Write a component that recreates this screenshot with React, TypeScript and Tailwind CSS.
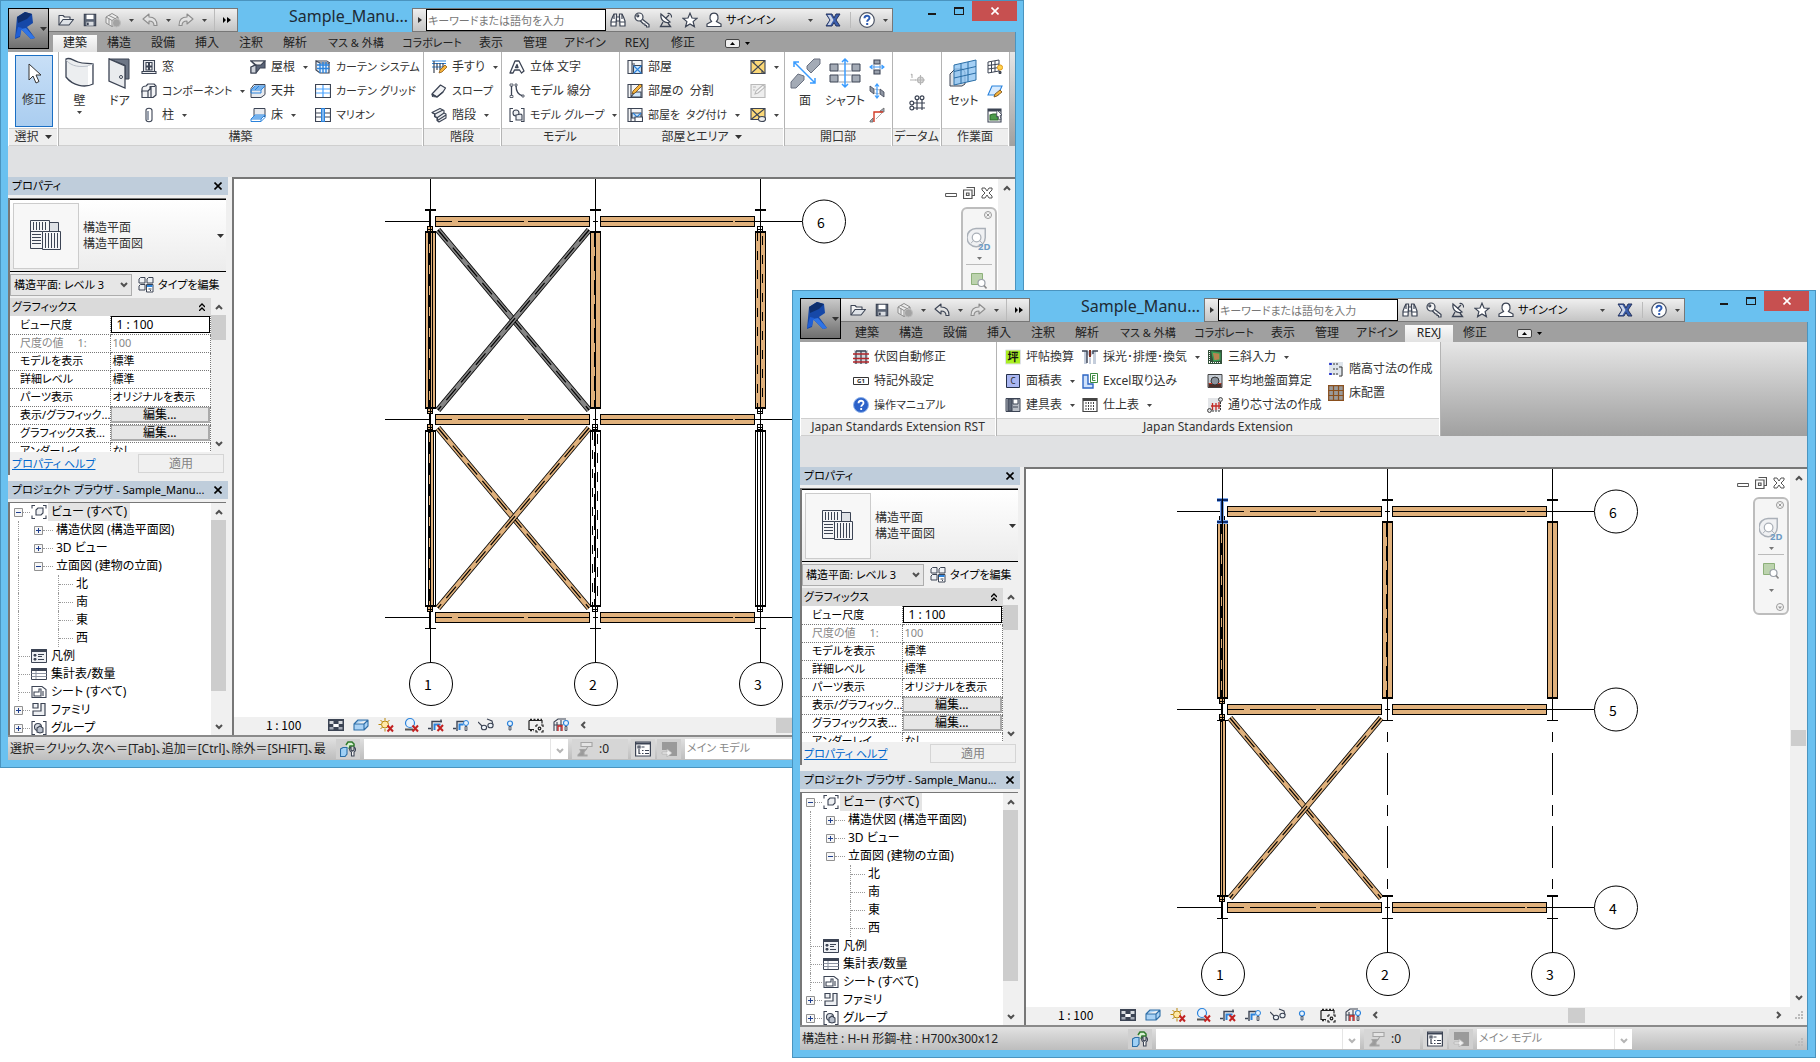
import { useId, type ReactNode } from 'react'
import clsx from 'clsx'

const INK = '#3c4454'
const BLUE = '#2b83dc'
const WOOD = '#e0b17c'

/* ---------- icons ---------- */

const icons: Record<string, ReactNode> = {
  open: (
    <g fill="#f4f4f4" stroke={INK} strokeWidth="1.1" strokeLinejoin="round">
      <path d="M1 13V3.5h4l1.5 1.5H12v2.5" />
      <path d="M1 13l4-5.5h10.5L11 13z" fill="#dfe3e8" />
    </g>
  ),
  save: (
    <g stroke={INK} strokeWidth="1.3">
      <path d="M1.5 1.5h13v13h-13z" fill="#5b6474" />
      <path d="M4 2h8v5H4z" fill="#fff" stroke="none" />
      <path d="M4 10h8v4.5H4z" fill="#d9dce1" stroke="none" />
      <path d="M5.5 11v3" strokeWidth="2" />
    </g>
  ),
  sync: (
    <g fill="#ececec" stroke="#8d8d8d" strokeWidth="1">
      <path d="M1 5l6-3.5L13 5v6l-6 3.5L1 11z" />
      <path d="M4 3.5l6 3M1 5l6 3.5L13 5M7 8.500v6M4 6.500v6" fill="none" />
      <circle cx="11.500" cy="11" r="4" fill="#a3a3a3" stroke="#bdbdbd" />
    </g>
  ),
  undo: <path d="M1 7l6-5v3c5 0 8 2.500 8 8.500h-3c0-3-1.500-4.500-5-4.500v3z" fill="#e2e2e2" stroke="currentColor" strokeWidth="1.1" strokeLinejoin="round" />,
  redo: <path d="M15 7L9 2v3c-5 0-8 2.500-8 8.500h3c0-3 1.500-4.500 5-4.500v3z" fill="#e2e2e2" stroke="currentColor" strokeWidth="1.1" strokeLinejoin="round" />,
  binoculars: (
    <g fill="#fff" stroke={INK} strokeWidth="1.2">
      <path d="M2.500 5l1.500-3h2.500v4L6 14H1V9zM13.500 5L12 2H9.500v4l.5 8h5V9z" />
      <path d="M6.500 5h3v4h-3zM1 10h5M10 10h5M4 2v5M12 2v5" />
    </g>
  ),
  key: (
    <g fill="#f4f4f4" stroke={INK} strokeWidth="1.2" strokeLinejoin="round">
      <path d="M7.500 6.500l7.500 6v2.500h-2.500v-1.500H11V12H9.500L6 8.500z" />
      <circle cx="5" cy="5" r="4" />
      <circle cx="3.800" cy="3.800" r="1" />
    </g>
  ),
  dish: (
    <g fill="none" stroke={INK} strokeWidth="1.3">
      <path d="M3 2c-1 6 4 10 9 8z" fill="#fff" />
      <path d="M7.500 6.500L11 3M5 10l-2.500 4.500h10L10 11" />
      <path d="M9.500 1.500c2.500-.5 4.500 1.500 4 4" strokeWidth="1.100" />
    </g>
  ),
  star: <path d="M8 1.200l2 4.800 5 .3-3.900 3.300 1.300 5L8 11.900l-4.400 2.700 1.300-5L1 6.300 6 6z" fill="#fff" stroke={INK} strokeWidth="1.200" />,
  user: (
    <path d="M5.500 9.500C2.500 6 4 1.200 8 1.200S13.500 6 10.500 9.500l4.500 2.500v2.500H1V12z" fill="#fff" stroke={INK} strokeWidth="1.200" />
  ),
  exchange: (
    <g>
      <path d="M1 2h6l2 4 2-4h4l-4 6 4 6h-4l-2-3.500L7 14H1l4-6z" fill="#3c5fae" stroke="#27355e" />
      <path d="M2.500 3h3l3 5-3 5h-3l3-5z" fill="#cdd5e6" />
    </g>
  ),
  help: (
    <g>
      <circle cx="8" cy="8" r="7.300" fill="#fff" stroke="#4d5566" strokeWidth="1.200" />
      <path d="M5.500 6.300c0-3.400 5-3.300 5-.3 0 1.800-2.300 1.900-2.300 3.700M8.200 11v2" fill="none" stroke="#2d5bb3" strokeWidth="2" />
    </g>
  ),
  window: (
    <g fill="#eef0f3" stroke={INK} strokeWidth="1.100">
      <path d="M2.500 1.500h11v11h-11zM1 12.500h14v2H1z" />
      <path d="M5 3.500h2.500V7H5zM8.500 3.500H11V7H8.500zM5 8h2.500v3H5zM8.500 8H11v3H8.500z" fill="#fff" />
    </g>
  ),
  component: (
    <g fill="#f2f3f5" stroke={INK} strokeWidth="1.200" strokeLinejoin="round">
      <path d="M5 3l2-2h6l2 2v9l-3 2.500H6V9H1V6c0-2 2-3 4-3z" />
      <path d="M1 8h6v6.500H1zM7 8l2-2V3.500h5M10 4v10" />
    </g>
  ),
  column: (
    <g stroke={INK} strokeWidth="1.100">
      <path d="M5 3.500C5 .5 11 .5 11 3.500v9c0 3-6 3-6 0z" fill="#fff" />
      <path d="M7 4v9" stroke="#9aa2b0" strokeWidth="2" />
    </g>
  ),
  roof: (
    <g stroke={INK} strokeWidth="1.100">
      <path d="M1 2h14v7h-5l-4 5H1V8l4-2z" fill="#5b6578" />
      <path d="M1 2h14l-4 4H6z" fill="#eee" />
      <path d="M1 8l5-2v8H1z" fill="#cfd3da" />
    </g>
  ),
  ceiling: (
    <g stroke={INK} strokeWidth="1">
      <path d="M4 1.500h11v10l-4 3H1v-9z" fill="#e8eaee" />
      <path d="M1 7l4-4h10l-4 4z" fill="#bfe0ff" stroke={BLUE} />
      <path d="M1 7v3h10V7M3 5h10M5 7l4-4" fill="none" stroke={BLUE} />
    </g>
  ),
  floor: (
    <g stroke={INK} strokeWidth="1">
      <path d="M4 1.500h11v8h-11z" fill="#e8eaee" />
      <path d="M1 12l4-4h10l-4 4z" fill="#bfe0ff" stroke={BLUE} />
      <path d="M1 12v2.500h10V12M11 14.500l4-4V8M3 10h10" fill="none" stroke={BLUE} />
    </g>
  ),
  curtainSystem: (
    <g fill="none">
      <path d="M1 2l4 2h9v10H5l-4-3z" fill="#eaf3fd" stroke={INK} strokeWidth="1.200" />
      <path d="M1 2h11l3 2" stroke={INK} />
      <path d="M2 6h12.500M2 9.500h12.500M5 4v10M8 3v11M11 3v11" stroke={BLUE} strokeWidth="1.400" />
    </g>
  ),
  curtainGrid: (
    <g fill="none">
      <path d="M.5 1.500h15v13H.5z" fill="#fff" stroke={INK} strokeWidth="1.200" />
      <path d="M8 2v12M1 6h14M1 10h14" stroke="#4aa3ff" strokeWidth="1.200" />
    </g>
  ),
  mullion: (
    <g>
      <path d="M.5 1.500h15v13H.5z" fill="#fff" stroke={INK} strokeWidth="1.200" />
      <path d="M1 6h14M1 10h14" stroke={INK} strokeWidth="1.200" />
      <path d="M6 1h4v14H6z" fill={BLUE} />
      <path d="M8 2v12" stroke="#d4e9ff" />
    </g>
  ),
  railing: (
    <g fill="none" stroke={BLUE} strokeWidth="1.200">
      <path d="M1 2h14M1 4.500h14M1 8h14" />
      <path d="M3 2v12M6 4v7M9 4v7M12 4v4" stroke={INK} />
      <path d="M8 14l1-3 5-5 2 2-5 5z" fill="#f7b43c" stroke="#8d5a17" strokeWidth=".8" />
    </g>
  ),
  ramp: (
    <g fill="#f2f3f5" stroke={INK} strokeWidth="1.200" strokeLinejoin="round">
      <path d="M1 11L9.500 2l5 3-2.500 4-6 5z" />
      <path d="M1 11l5 3 6-5M6 14l-4.500-.5L1 11" fill="none" />
    </g>
  ),
  stairs: (
    <g fill="#eceef1" stroke={INK} strokeWidth="1.100" strokeLinejoin="round">
      <path d="M9 1.500l4 2v2.500l2 1v4l-7 4-2-1.500V11L3.500 9.500V7L1 5.500z" />
      <path d="M1 5.500l3 1.500v2.500M4 7l8-4M3.500 9.500l3 1 6.500-4.500M6.500 10.500V13.500l8.500-5.500" fill="none" />
    </g>
  ),
  text3d: (
    <path d="M1 14L6 2h4l5 10-2.500 2-2-3H5.500L4 14zM6.500 8.500h2.500L8 5.500z" fill="#fff" stroke={INK} strokeWidth="1.300" strokeLinejoin="round" />
  ),
  modelLine: (
    <g fill="none" stroke={INK} strokeWidth="1.300">
      <path d="M2.500 3v9M7 2.500C7 9 9 12 14 13" />
      <path d="M1 1h3v2H1zM1 12.500h3v2H1zM6 1h2v2H6zM13 12h2v2h-2z" fill="#fff" strokeWidth=".8" />
    </g>
  ),
  modelGroup: (
    <g fill="#eceef1" stroke={INK} strokeWidth="1.100">
      <path d="M4 1.500H1v13h3M12 1.500h3v13h-3" fill="none" />
      <circle cx="7" cy="6" r="3" />
      <path d="M7 8l5-1 1 1v5H7z" />
    </g>
  ),
  room: (
    <g strokeWidth="1.100">
      <path d="M1 1.500h14v13H1z" fill="#f4f5f7" stroke={INK} />
      <path d="M5 2v12M5 5h3" stroke={INK} />
      <path d="M6.500 6.500h8v8h-8z" fill="#cfe6fb" stroke={INK} />
      <path d="M6.500 6.500l8 8M14.500 6.500l-8 8" stroke={BLUE} />
    </g>
  ),
  roomSplit: (
    <g strokeWidth="1.100">
      <path d="M1 1.500h14v13H1z" fill="#f4f5f7" stroke={INK} />
      <path d="M4 2v12M4 14l4-5h6v5z" fill="#cfe6fb" stroke={INK} />
      <path d="M5 11l1-3 7-7 2 2-7 7z" fill="#f7b43c" stroke="#6d4a17" strokeWidth=".8" />
    </g>
  ),
  roomTag: (
    <g strokeWidth="1.100">
      <path d="M1 1.500h14v13H1z" fill="#f4f5f7" stroke={INK} />
      <path d="M4 2v12M5 6h9v5H5z" fill="#cfe6fb" stroke={INK} />
      <path d="M6 6l4 4 4-4" fill="none" stroke={BLUE} />
      <path d="M8 10h7.500v4.500H8z" fill="#fff" stroke={INK} />
    </g>
  ),
  area: (
    <g stroke={INK} strokeWidth="1.100">
      <path d="M1 1.500h14v13H1z" fill="#fbd878" />
      <path d="M1 1.500l14 13M15 1.500l-14 13M4 2v3M12 14v-3" />
    </g>
  ),
  areaOff: (
    <g stroke="#b9b9b9" strokeWidth="1.100">
      <path d="M1 1.500h14v13H1z" fill="#eee" />
      <path d="M5 11l1-3 7-6 2 2-7 6zM3 4h3M3 7h2" fill="#f8f8f8" />
    </g>
  ),
  areaTag: (
    <g stroke={INK} strokeWidth="1.100">
      <path d="M1 1.500h14v11H1z" fill="#fbd878" />
      <path d="M1 1.500l12 12M15 1.500l-14 11" />
      <ellipse cx="12" cy="12" rx="3.500" ry="2.500" fill="#eee" />
    </g>
  ),
  wallOpening: (
    <g strokeWidth="1.100">
      <path d="M5 1h6v4H5zM5 11h6v4H5z" fill="#9aa1ad" stroke={INK} />
      <path d="M5 5v6M11 5v6" stroke="#9aa1ad" />
      <path d="M1 8h14M3.500 6L1 8l2.500 2M12.500 6L15 8l-2.500 2" fill="none" stroke="#3a9cff" />
    </g>
  ),
  verticalOpening: (
    <g strokeWidth=".8">
      <path d="M1 3l4 3v5L1 8zM11 6l4 3v5l-4-3z" fill="#8f96a3" stroke={INK} />
      <path d="M5 6l6 1M5 10l6 1" stroke="#9aa1ad" />
      <path d="M8 1v14M6 3.500L8 1l2 2.500M6 12.500L8 15l2-2.500" fill="none" stroke="#3a9cff" strokeWidth="1.200" />
    </g>
  ),
  dormer: (
    <g fill="none" strokeWidth="1.400">
      <path d="M1 14l3-3v4H1zM11 4l4-3v4h-4z" fill="#a4abb6" stroke="#666" strokeWidth=".8" />
      <path d="M5 15V5h9" stroke="#d23a26" />
      <path d="M7 12l6-6" stroke="#999" strokeWidth=".8" />
    </g>
  ),
  level: (
    <g fill="none" stroke="#b5b5b5" strokeWidth="1.100">
      <path d="M1 9h6M3 3v4M2 4l1-1" />
      <circle cx="11.500" cy="9" r="3" fill="#dcdcdc" />
      <path d="M11.500 4v10M6 9h10" />
    </g>
  ),
  grid: (
    <g fill="#fff" stroke={INK} strokeWidth="1.200">
      <path d="M8 3v12M13 3v12M3 8h13M3 13h13" />
      <circle cx="8" cy="2.800" r="1.900" />
      <circle cx="13" cy="2.800" r="1.900" />
      <circle cx="2.800" cy="8" r="1.900" />
      <circle cx="2.800" cy="13" r="1.900" />
    </g>
  ),
  planeShow: (
    <g fill="none" stroke={INK} strokeWidth="1">
      <path d="M1 3l11-2v11L1 14zM4.500 2.500v11M8 2v11M1 6.500l11-1.500M1 10l11-1.500" />
      <circle cx="13" cy="8.500" r="2.600" fill="#ffd34d" stroke="#e29a1c" />
      <path d="M12 12.500h2v2h-2z" fill="#555" />
    </g>
  ),
  planeRef: (
    <g strokeWidth="1.100">
      <path d="M1 12L5 3h10l-4 9z" fill="#d7ebff" stroke={BLUE} />
      <path d="M7 14l1-3 5-4 2 2-5 4z" fill="#f7b43c" stroke="#6d4a17" strokeWidth=".8" />
    </g>
  ),
  planeViewer: (
    <g strokeWidth="1.100">
      <path d="M1 2h13v13H1z" fill="#fff" stroke={INK} />
      <path d="M1 2h13v2.500H1z" fill={INK} />
      <path d="M3 8l3-1h5v6H3z" fill="#4c9a4a" stroke="#2e6b2d" />
      <path d="M10 3l5 5-2 .5 1 4-2 .5-1-4-1.500 1z" fill="#fff" stroke={INK} strokeWidth=".8" />
    </g>
  ),
  autoFix: (
    <g fill="none" strokeWidth="1.300">
      <path d="M1 1h14v14H1z" fill="#d3d7dc" />
      <path d="M3 2v13M8 2v13M13 2v13M3 2h10" stroke={INK} />
      <path d="M0 5h16M0 9.500h16M0 13h16" stroke="#b3262a" />
    </g>
  ),
  g1: (
    <g>
      <path d="M.5 4.500h15v7H.5z" fill="#fff" stroke="#333" />
      <text x="8" y="10" fontSize="6" fontWeight="bold" textAnchor="middle" fill="#222">G1</text>
    </g>
  ),
  manual: (
    <g>
      <circle cx="8" cy="8" r="7.500" fill="#2c62c9" stroke="#8fb2ea" />
      <path d="M5.500 6.300c0-3.400 5-3.300 5-.3 0 1.800-2.300 1.900-2.300 3.700M8.200 11v2" fill="none" stroke="#fff" strokeWidth="1.800" />
    </g>
  ),
  tsubo: (
    <g>
      <path d="M.5 1h15v14H.5z" fill="#a9ef22" stroke="#dce0e6" />
      <text x="8" y="12" fontSize="11" fontWeight="bold" textAnchor="middle" fill="#111">坪</text>
    </g>
  ),
  areaTable: (
    <g>
      <path d="M1.500 1.500h13v13h-13z" fill="#a9b6f2" stroke="#25304a" />
      <text x="8" y="11" fontSize="8" textAnchor="middle" fill="#222">C</text>
    </g>
  ),
  doorTable: (
    <g stroke={INK}>
      <path d="M1 1.500h14v13H1z" fill="#b9bec6" />
      <path d="M3 2h4v12H3z" fill="#5e6776" />
      <path d="M8 2h5v5H8zM8 10h5" fill="#fff" />
    </g>
  ),
  light: (
    <g>
      <path d="M2 2h12v13H2z" fill="#c4cddb" />
      <path d="M5 5l3 3 3-3v10H9V9L8 8 7 9v6H5z" fill="#fff" />
      <path d="M0 2h5v12M16 2h-5v3" fill="none" stroke={INK} strokeWidth="1.400" />
      <path d="M8 1v7" stroke="#7d2f22" strokeWidth="2" />
    </g>
  ),
  excel: (
    <g>
      <path d="M1 2h5v9h5v4H1z" fill="#cfe1fb" stroke="#2e66c4" strokeWidth="1.400" />
      <path d="M8.500.5h7v9h-7z" fill="#fff" stroke="#3b8a41" />
      <path d="M13.500 2.500h-3v5h3M10.500 5H13" fill="none" stroke="#3b8a41" />
    </g>
  ),
  finish: (
    <g fill="none" stroke="#444">
      <path d="M1 1.500h14v13H1z" fill="#fff" strokeWidth="1.200" />
      <path d="M1 3h14" strokeWidth="2" />
      <path d="M4 5v9M6.500 5v9M9 5v9M11.500 5v9" strokeDasharray="2 1" />
    </g>
  ),
  triangle: (
    <g>
      <path d="M1 1h14v14H1z" fill="#33503a" />
      <path d="M5 3l8 1v7l-6 1z" fill="#b98450" stroke="#39a056" strokeWidth="1.300" />
      <path d="M2 13.500h12M2.500 2v12" stroke="#fff" strokeDasharray="1 1" />
    </g>
  ),
  ground: (
    <g>
      <path d="M1 1.500h14v13H1z" fill="#c5ccd4" stroke="#444" />
      <path d="M1.500 10h13v4h-13z" fill="#4c2f2a" />
      <circle cx="8" cy="8" r="4" fill="#8c949e" stroke="#333" />
      <path d="M2 10.500h3M11 10.500h3" stroke="#d23a26" />
    </g>
  ),
  gridDim: (
    <g fill="none">
      <path d="M1 1h13v13H1z" fill="#e3e5e8" />
      <path d="M4 9h9M5.500 6v7M9 6v7M12 5v7" stroke="#c22a26" strokeWidth="1.300" />
      <circle cx="13.500" cy="2.500" r="1.900" stroke="#333" />
      <circle cx="2.500" cy="13.500" r="1.900" stroke="#333" />
      <path d="M13.500 5v9M5 14h8" stroke="#333" strokeDasharray="2 1" />
    </g>
  ),
  heightDim: (
    <g fill="none">
      <path d="M1 1h14v13H1z" fill="#dfe5ec" />
      <path d="M1 3h3M1 13h3M2.500 2v2M2.500 12v2" stroke="#1f2fd0" strokeWidth="1.500" />
      <path d="M5 3h5M5 8h5M5 13h5" stroke="#333" strokeDasharray="2 1" />
      <path d="M11 6h3v9h-3" stroke="#333" />
    </g>
  ),
  floorLayout: (
    <g>
      <path d="M0 0h16v16H0z" fill="#9a9a9a" />
      <path d="M.7 0v16M5.500 0v16M10.500 0v16M15.300 0v16M0 .7h16M0 5.500h16M0 10.500h16M0 15.300h16" stroke="#8a4f1d" strokeWidth="1.200" />
    </g>
  ),
  editType: (
    <g fill="#eef0f3" stroke={INK} strokeWidth="1">
      <path d="M1 2l1.500-1.500H7V6H1zM9 2l1.500-1.500H15V6H9zM1 9l1.500-1.500H7V13H1z" />
      <path d="M8.500 7.500h6.500V15H8.500z" fill="#fff" />
      <path d="M9 8h5.500v2H9z" fill={BLUE} stroke="none" />
      <path d="M10.500 12h3M12 13.500h1" />
    </g>
  ),
  treeView: (
    <g fill="none" stroke={INK} strokeWidth="1.100">
      <path d="M4 1.500H1v3M12 1.500h3v3M4 14.500H1v-3M12 14.500h3v-3" />
      <path d="M5 6l2-2h5v5l-2 2H5z" fill="#eef0f3" />
    </g>
  ),
  treeLegend: (
    <g stroke={INK}>
      <path d="M.5 1.500h15v13H.5z" fill="#eef0f3" />
      <path d="M.5 1.500h15v2H.5z" fill={INK} />
      <path d="M3 6.500h2v1.500H3zM3 10.500h2v1.500H3z" fill={INK} />
      <path d="M7 6.500h6M7 8.500h4M7 11.500h6" />
    </g>
  ),
  treeTable: (
    <g stroke={INK}>
      <path d="M.5 2.500h15v11H.5z" fill="#fff" />
      <path d="M.5 2.500h15v2H.5z" fill={INK} />
      <path d="M5 5v8M.5 7.500h15M.5 10.500h15" stroke="#8d94a2" />
    </g>
  ),
  treeSheet: (
    <g fill="#fff" stroke={INK} strokeWidth="1.100">
      <path d="M1 2.500h10l4 3v8H1z" />
      <path d="M3 8h5V5h2v7H3zM12 7v5" fill="none" />
    </g>
  ),
  treeFamily: <path d="M2 1.500h5V6H2zM10 1.500h4v12H2V9h8z" fill="#eef0f3" stroke={INK} strokeWidth="1.200" />,
  treeGroup: (
    <g fill="none" stroke={INK} strokeWidth="1.100">
      <path d="M4 1.500H1v13h3M12 1.500h3v13h-3" />
      <circle cx="7" cy="7" r="3.500" fill="#d8dce3" />
      <path d="M6 8l3-2 3 2v4l-3 1-3-1z" fill="#b9c0cc" />
    </g>
  ),
  detail: (
    <g>
      <path d="M0 2h16v12H0z" fill={INK} />
      <path d="M1.500 4h4v3h-4zM10.500 4h4v3h-4zM5.500 7h5v3h-5z" fill="#d7dade" />
      <path d="M1.500 10h4v2.500h-4zM10.500 10h4v2.500h-4z" fill="#a6acb7" />
      <path d="M5.500 7h5v3h-5z" fill="#fff" />
    </g>
  ),
  visual: <path d="M1 7l4-4h10v6l-4 4H1zM1 7h10l4-4M11 7v6" fill="#a9d2f5" stroke="#2f6fa8" strokeWidth="1.100" strokeLinejoin="round" />,
  sunOff: (
    <g>
      <circle cx="7" cy="7.500" r="3.500" fill="#ffe9a6" stroke="#b8860b" />
      <path d="M7 1v2.500M7 12v2.500M.5 7.500H3M2.500 3l2 2M11.500 3l-2 2M2.500 12l2-2" stroke="#b8860b" />
      <path d="M9.500 8.500l5.500 6M15 8.500l-5.500 6" stroke="#c22222" strokeWidth="2" />
    </g>
  ),
  shadowOff: (
    <g>
      <circle cx="7" cy="6" r="4.500" fill="#e8f3fd" stroke={BLUE} strokeWidth="1.200" />
      <path d="M2 12.500h8" stroke="#555" strokeWidth="2" />
      <path d="M9.500 8.500l5.500 6M15 8.500l-5.500 6" stroke="#c22222" strokeWidth="2" />
    </g>
  ),
  cropOff: (
    <g fill="none">
      <path d="M0 11.500h3M4 14V4.500h10M13 2.500v3" stroke={INK} strokeWidth="1.400" />
      <path d="M6.500 13V7.500h6" stroke={BLUE} strokeWidth="2" />
      <path d="M9.500 8l5.500 6M15 8l-5.500 6" stroke="#c22222" strokeWidth="2" />
    </g>
  ),
  cropShow: (
    <g fill="none">
      <path d="M0 11.500h3M4 14V4.500h7" stroke={INK} strokeWidth="1.400" />
      <path d="M6.500 13V7.500h4" stroke={BLUE} strokeWidth="2" />
      <circle cx="13" cy="6" r="2.500" fill="#e8f3fd" stroke={BLUE} />
      <path d="M12 9.500h2v4h-2z" fill="#ccc" stroke={INK} strokeWidth=".8" />
    </g>
  ),
  glasses: (
    <g fill="#eef3f8" stroke={INK} strokeWidth="1.100">
      <path d="M0 5l4 4M9 2l5 2 1 4" fill="none" />
      <ellipse cx="6" cy="10.500" rx="2.600" ry="2.300" />
      <ellipse cx="12.500" cy="8.500" rx="2.600" ry="2.300" />
    </g>
  ),
  bulb: (
    <g>
      <circle cx="7" cy="6.500" r="2.500" fill="#e8f3fd" stroke={BLUE} strokeWidth="1.200" />
      <path d="M6 9.500h2v3.500H6z" fill="#bcd" stroke={INK} strokeWidth=".8" />
    </g>
  ),
  filmstrip: (
    <g fill="none" stroke="#222" strokeWidth="1.200">
      <path d="M1 3.500h13v3M1 3.500v9h5" />
      <path d="M2 2.500h12M2 13.500h4" strokeDasharray="2 1.500" strokeWidth="1.600" />
      <path d="M8 8h2M13 8h2v2M8 8v2M8 13v2h2M13 15h2v-2" />
      <circle cx="11.500" cy="11.500" r="1.300" />
    </g>
  ),
  analytic: (
    <g fill="none" stroke={INK} strokeWidth="1.100">
      <path d="M1 14V5l4-3h8M1 8h9M4 5v9M8 3v11" />
      <path d="M5 14V9h4v5" stroke="#cc2222" strokeWidth="1.300" />
      <circle cx="13" cy="6" r="2.500" fill="#e8f3fd" stroke={BLUE} />
      <path d="M12 9.500h2v4h-2z" fill="#ccc" strokeWidth=".8" />
    </g>
  ),
  workset: (
    <g strokeWidth="1.100">
      <path d="M6 4l2-3h4l2 2v2h-4L9 8" fill="#d7f0d2" stroke="#2f7a2b" strokeWidth="1.500" />
      <path d="M.5 8L3 6.500h4V13l-2 2.500H.5z" fill="#9fd0f5" stroke="#2b6ea6" />
      <path d="M11 6v3l1.500 1L14 9V6c2 1 2 4 0 5v4h-2.500v-4c-2.500-1-2.500-4-.5-5z" fill="#fff" stroke={INK} />
    </g>
  ),
  filter: (
    <g fill="#e4e4e4" stroke="#a5a5a5" strokeWidth="1.100">
      <path d="M4 1.500h11v4H4zM11 5.500L9 8.500" />
      <path d="M3 8.500h6l-2 2.500v3h3v1H1v-1l3-3z" fill="#9b9b9b" />
    </g>
  ),
  options: (
    <g fill="none" stroke={INK} strokeWidth="1.200">
      <path d="M.6 1h14.800v14H.6z" fill="#fff" />
      <path d="M1 2.500h14" strokeWidth="2" />
      <path d="M3 5h2v2H3zM6.500 6h3M7 9.500h1.500M10 9.500h4M7 12.500h1.500M10 12.500h4M4 8v4.500h1.500" />
    </g>
  ),
  exclude: (
    <g>
      <path d="M1 1h15v14H8V9H1z" fill="#9a9a9a" />
      <path d="M1 11h5V8l5 4-5 4v-3H1z" fill="#eee" stroke="#b5b5b5" strokeWidth=".8" />
    </g>
  ),
}

function Icon({ name, className = 'size-4' }: { name: string; className?: string }) {
  return (
    <svg viewBox="0 0 16 16" className={clsx('shrink-0', className)} aria-hidden="true">
      {icons[name]}
    </svg>
  )
}

function Caret({ className = 'text-[#444]' }: { className?: string }) {
  return (
    <svg viewBox="0 0 5 3" className={clsx('h-[3px] w-[5px] shrink-0', className)} aria-hidden="true">
      <path d="M0 0h5L2.500 3z" fill="currentColor" />
    </svg>
  )
}

function Chevron({ dir, className = 'text-[#505050]' }: { dir: 'up' | 'down' | 'left' | 'right'; className?: string }) {
  const paths = {
    up: 'M1 6l3-3 3 3',
    down: 'M1 2l3 3 3-3',
    left: 'M6 1L3 4l3 3',
    right: 'M2 1l3 3-3 3',
  }
  return (
    <svg viewBox="0 0 8 8" className={clsx('size-2 shrink-0', className)} aria-hidden="true">
      <path d={paths[dir]} fill="none" stroke="currentColor" strokeWidth="2" />
    </svg>
  )
}

/* ---------- title bar ---------- */

function AppLogo() {
  return (
    <svg viewBox="0 0 40 40" className="size-10" aria-hidden="true">
      <path d="M8 8l8-5 7 2 1 9-6 4 8 11-4 1-10-10-1 8-5 2z" fill="#1648a8" />
      <path d="M8 8l8-5 7 2-5 5-9 4z" fill="#0e2f6e" />
      <path d="M12 20l5-1 9 10-4 1z" fill="#2f74e6" />
      <path d="M9 18l4 1-2 8-5 2z" fill="#1f5fd6" />
      <path d="M31 18h7l-3.500 4z" fill="#333" />
    </svg>
  )
}

function TitleBar({ canUndo }: { canUndo: boolean }) {
  return (
    <header className="-mt-px -mr-px flex h-8 items-start pl-[41px]">
      <div className="mt-2 flex h-6 w-[189px] shrink-0 items-center border border-l-0 border-[#777] bg-linear-to-b from-[#efefef] to-[#c4c4c4] pl-[9px]">
        <button type="button" aria-label="開く"><Icon name="open" /></button>
        <button type="button" aria-label="保存" className="ml-[9px]"><Icon name="save" className="size-[14px]" /></button>
        <button type="button" aria-label="同期" className="ml-2 flex items-center gap-2"><Icon name="sync" /><Caret /></button>
        <button type="button" aria-label="元に戻す" className={clsx('ml-2 flex items-center gap-2', canUndo ? 'text-[#3c4454]' : 'text-[#8d8d8d]')}><Icon name="undo" /><Caret /></button>
        <button type="button" aria-label="やり直し" className="ml-[7px] flex items-center gap-2 text-[#8d8d8d]"><Icon name="redo" /><Caret /></button>
        <button type="button" aria-label="カスタマイズ" className="ml-[7px] flex h-full items-center border-l border-[#bbb] pl-2">
          <svg viewBox="0 0 8 6" className="h-[6px] w-2" aria-hidden="true"><path d="M0 0l3 3-3 3zM4 0l4 3-4 3z" /></svg>
        </button>
      </div>
      <h1 className="mt-1 flex-1 truncate pr-1 text-right font-['Noto_Sans',sans-serif] text-base text-[#1e2a35]">Sample_Manu...</h1>
      <div className="mt-2 flex h-6 w-[481px] shrink-0 items-center border border-[#777] bg-linear-to-b from-[#efefef] to-[#c4c4c4]">
        <svg viewBox="0 0 4 6" className="ml-[5px] h-2 w-1" aria-hidden="true"><path d="M0 0l4 3-4 3z" fill="#333" /></svg>
        <input aria-label="検索" placeholder="キーワードまたは語句を入力" className="ml-1 h-[22px] w-[180px] border border-black bg-white px-px text-[11px] outline-none placeholder:text-[#777]" />
        <div className="ml-1 flex items-center gap-2">
          <button type="button" aria-label="検索する"><Icon name="binoculars" /></button>
          <button type="button" aria-label="サブスクリプション"><Icon name="key" /></button>
          <button type="button" aria-label="通信センター"><Icon name="dish" /></button>
          <button type="button" aria-label="お気に入り"><Icon name="star" /></button>
        </div>
        <button type="button" className="ml-2 flex flex-1 items-center gap-1 text-[11px]"><Icon name="user" />サインイン<Caret className="ml-auto text-[#444]" /></button>
        <button type="button" aria-label="Exchange" className="ml-3"><Icon name="exchange" /></button>
        <button type="button" aria-label="ヘルプ" className="ml-[9px] flex items-center gap-2 border-l border-[#bbb] pr-1 pl-2"><Icon name="help" /><Caret /></button>
      </div>
      <div className="ml-[25px] flex h-[21px] shrink-0 text-[#1a1a1a]">
        <button type="button" aria-label="最小化" className="flex w-[27px] items-end justify-center pb-[6px]"><span className="h-[2px] w-2 bg-current" /></button>
        <button type="button" aria-label="最大化" className="flex w-[27px] items-center justify-center pt-px"><span className="h-2 w-[10px] border border-t-2 border-current" /></button>
        <button type="button" aria-label="閉じる" className="mt-px flex w-[45px] items-center justify-center bg-[#c75050] text-white">
          <svg viewBox="0 0 8 8" className="size-2" aria-hidden="true"><path d="M.5.5l7 7M7.500.5l-7 7" stroke="currentColor" strokeWidth="1.600" /></svg>
        </button>
      </div>
    </header>
  )
}

/* ---------- ribbon ---------- */

const tabs = [
  { label: '建築', width: 'w-11' },
  { label: '構造', width: 'w-11' },
  { label: '設備', width: 'w-11' },
  { label: '挿入', width: 'w-11' },
  { label: '注釈', width: 'w-11' },
  { label: '解析', width: 'w-11' },
  { label: 'マス & 外構', width: 'w-[78px]' },
  { label: 'コラボレート', width: 'w-[74px]' },
  { label: '表示', width: 'w-11' },
  { label: '管理', width: 'w-11' },
  { label: 'アドイン', width: 'w-14' },
  { label: 'REXJ', width: 'w-12' },
  { label: '修正', width: 'w-11' },
]

function RibbonTabs({ active }: { active: string }) {
  return (
    <nav className="flex h-5 items-end bg-[#a0a0a0] pl-[45px]">
      {tabs.map(tab => (
        <button
          key={tab.label}
          type="button"
          className={clsx(
            'h-[17px] shrink-0 pb-[2px] leading-[15px] whitespace-nowrap text-[#222]',
            tab.label.length > 5 ? 'text-[11px]' : 'text-xs',
            tab.width,
            tab.label === active && 'bg-linear-to-b from-[#fafafa] to-[#e2e2e2]',
          )}
        >
          {tab.label}
        </button>
      ))}
      <button type="button" aria-label="リボンを最小化" className="ml-5 flex h-[17px] items-center gap-[5px]">
        <span className="flex h-[9px] w-[15px] items-center justify-center rounded-xs border border-[#444] bg-[#eee]">
          <svg viewBox="0 0 5 3" className="h-[3px] w-[5px]" aria-hidden="true"><path d="M0 3h5L2.500 0z" /></svg>
        </span>
        <Caret className="text-black" />
      </button>
    </nav>
  )
}

function RibbonPanel({ title, width, menu, children }: { title: string; width: string; menu?: boolean; children: ReactNode }) {
  return (
    <section className={clsx('flex shrink-0 flex-col border-r border-[#b4b4b4]', width)}>
      <div className="flex h-[76px] pt-[3px]">{children}</div>
      <h2 className="mr-px flex h-[18px] items-center justify-center gap-[6px] border-y border-[#cfcfcf] bg-[#eeeeee] text-xs leading-4 whitespace-nowrap text-[#333]">
        {title}
        {menu && <svg viewBox="0 0 7 4" className="h-1 w-[7px]" aria-hidden="true"><path d="M0 0h7L3.500 4z" fill="#333" /></svg>}
      </h2>
    </section>
  )
}

function Tool({ icon, label, menu, small }: { icon: string; label: string; menu?: boolean; small?: boolean }) {
  return (
    <button type="button" className={clsx('flex h-6 items-center gap-[5px] whitespace-pre text-[#333]', small ? 'text-[11px]' : 'text-xs')}>
      <Icon name={icon} />
      {label}
      {menu && <Caret className="ml-[3px] text-[#444]" />}
    </button>
  )
}

function ToolColumn({ width, children }: { width?: string; children: ReactNode }) {
  return <div className={clsx('flex shrink-0 flex-col', width)}>{children}</div>
}

function BigTool({ label, menu, width, children }: { label: string; menu?: boolean; width: string; children: ReactNode }) {
  return (
    <button type="button" className={clsx('flex h-[72px] shrink-0 flex-col items-center text-xs leading-4 whitespace-nowrap text-[#333]', width)}>
      <svg viewBox="0 0 32 32" className="mt-[2px] mb-1 size-8" aria-hidden="true">{children}</svg>
      {label}
      {menu && <Caret className="mt-[2px] text-[#444]" />}
    </button>
  )
}

function ArchitectureRibbon() {
  return (
    <>
      <RibbonPanel title="選択" width="w-[50px]" menu>
        <button type="button" className="ml-[6px] flex h-[72px] w-[38px] flex-col items-center border border-[#1b6fc4] bg-linear-to-b from-[#c8dff6] to-[#aacdf0] text-xs text-[#333]">
          <svg viewBox="0 0 16 24" className="mt-[6px] h-6 w-4" aria-hidden="true">
            <path d="M3 2v16l4-4 3 7 3-1.500-3-6.500h5z" fill="#fff" stroke="#333" />
          </svg>
          <span className="mt-[6px]">修正</span>
        </button>
      </RibbonPanel>
      <RibbonPanel title="構築" width="w-[365px]">
        <BigTool label="壁" menu width="w-[41px]">
          <path d="M2 2c4-2 6 1 12 3s10 1 15 2v20c-8 4-20 2-27-7z" fill="#eceef0" stroke={INK} strokeWidth="1.300" />
          <path d="M2 3c6 7 14 7 22 6l5-2" fill="none" stroke="#b8bec8" />
          <path d="M24 9v19l4-1.500V8z" fill="#fff" />
        </BigTool>
        <BigTool label="ドア" width="w-[39px]">
          <path d="M5 2h20v20h-4V8z" fill="#6d7686" stroke={INK} />
          <path d="M5 2l16 7v22L5 24z" fill="#e9ebee" stroke={INK} strokeWidth="1.300" />
          <circle cx="17" cy="20" r="1.500" fill="#fff" stroke={INK} />
        </BigTool>
        <ToolColumn width="w-[107px] pl-[2px]">
          <Tool icon="window" label="窓" />
          <Tool icon="component" label="コンポーネント" menu small />
          <Tool icon="column" label="柱" menu />
        </ToolColumn>
        <ToolColumn width="w-[69px] pl-1">
          <Tool icon="roof" label="屋根" menu />
          <Tool icon="ceiling" label="天井" />
          <Tool icon="floor" label="床" menu />
        </ToolColumn>
        <ToolColumn>
          <Tool icon="curtainSystem" label="カーテン システム" small />
          <Tool icon="curtainGrid" label="カーテン グリッド" small />
          <Tool icon="mullion" label="マリオン" small />
        </ToolColumn>
      </RibbonPanel>
      <RibbonPanel title="階段" width="w-[78px]">
        <ToolColumn width="pl-[7px]">
          <Tool icon="railing" label="手すり" menu />
          <Tool icon="ramp" label="スロープ" small />
          <Tool icon="stairs" label="階段" menu />
        </ToolColumn>
      </RibbonPanel>
      <RibbonPanel title="モデル" width="w-[118px]">
        <ToolColumn width="pl-[7px]">
          <Tool icon="text3d" label="立体 文字" />
          <Tool icon="modelLine" label="モデル 線分" />
          <Tool icon="modelGroup" label="モデル グループ" menu small />
        </ToolColumn>
      </RibbonPanel>
      <RibbonPanel title="部屋とエリア" width="w-[165px]" menu>
        <ToolColumn width="w-[130px] pl-[7px]">
          <Tool icon="room" label="部屋" />
          <Tool icon="roomSplit" label="部屋の  分割" />
          <Tool icon="roomTag" label="部屋を  タグ付け" menu small />
        </ToolColumn>
        <ToolColumn>
          <Tool icon="area" label="" menu />
          <Tool icon="areaOff" label="" />
          <Tool icon="areaTag" label="" menu />
        </ToolColumn>
      </RibbonPanel>
      <RibbonPanel title="開口部" width="w-[108px]">
        <BigTool label="面" width="w-10">
          <path d="M18 12V9l7-7h6v5l-9 9zM2 25l7-8 6 2v4l-8 8H2z" fill="#a4abb6" stroke="#6a7180" />
          <path d="M5 5l21 21M5 10V5h5M26 21v5h-5" fill="none" stroke="#3a9cff" strokeWidth="1.500" />
        </BigTool>
        <BigTool label="シャフト" width="w-10">
          <path d="M1 7h8v7H1zM23 7h8v7h-8zM1 18h8v7H1zM23 18h8v7h-8z" fill="#a4abb6" stroke={INK} />
          <path d="M9 7h14M9 14h14M9 18h14M9 25h14" stroke="#9aa1ad" />
          <path d="M16 2v28M13 5l3-3 3 3M13 27l3 3 3-3" fill="none" stroke="#3a9cff" strokeWidth="1.500" />
        </BigTool>
        <ToolColumn width="pl-1">
          <Tool icon="wallOpening" label="" />
          <Tool icon="verticalOpening" label="" />
          <Tool icon="dormer" label="" />
        </ToolColumn>
      </RibbonPanel>
      <RibbonPanel title="データム" width="w-[49px]">
        <ToolColumn width="pt-3 pl-4">
          <Tool icon="level" label="" />
          <Tool icon="grid" label="" />
        </ToolColumn>
      </RibbonPanel>
      <RibbonPanel title="作業面" width="w-[68px]">
        <BigTool label="セット" width="w-[43px]">
          <path d="M2 17l5-5h8l2 3v12l-3 2H2z" fill="#dde1e6" stroke={INK} />
          <path d="M6 8l22-5v20L6 28z" fill="#8ec4f2" fillOpacity=".8" stroke="#2b6ea6" />
          <path d="M13 6.500v20M20 5v20M6 14.500l22-5M6 21l22-5" stroke="#2b6ea6" />
        </BigTool>
        <ToolColumn width="pl-[2px]">
          <Tool icon="planeShow" label="" />
          <Tool icon="planeRef" label="" />
          <Tool icon="planeViewer" label="" />
        </ToolColumn>
      </RibbonPanel>
      <div className="flex-1 bg-linear-to-b from-[#e6e6e6] to-[#a0a0a0]" />
    </>
  )
}

function RexjRibbon() {
  return (
    <>
      <RibbonPanel title="Japan Standards Extension RST" width="w-[196px]">
        <ToolColumn width="pl-[52px]">
          <Tool icon="autoFix" label="伏図自動修正" />
          <Tool icon="g1" label="特記外設定" />
          <Tool icon="manual" label="操作マニュアル" small />
        </ToolColumn>
      </RibbonPanel>
      <RibbonPanel title="Japan Standards Extension" width="w-[444px]">
        <ToolColumn width="w-[86px] pl-2">
          <Tool icon="tsubo" label="坪帖換算" />
          <Tool icon="areaTable" label="面積表" menu />
          <Tool icon="doorTable" label="建具表" menu />
        </ToolColumn>
        <ToolColumn width="w-[125px] -ml-px">
          <Tool icon="light" label="採光･排煙･換気" menu />
          <Tool icon="excel" label="Excel取り込み" />
          <Tool icon="finish" label="仕上表" menu />
        </ToolColumn>
        <ToolColumn width="w-[121px]">
          <Tool icon="triangle" label="三斜入力" menu />
          <Tool icon="ground" label="平均地盤面算定" />
          <Tool icon="gridDim" label="通り芯寸法の作成" />
        </ToolColumn>
        <ToolColumn width="pt-3">
          <Tool icon="heightDim" label="階高寸法の作成" />
          <Tool icon="floorLayout" label="床配置" />
        </ToolColumn>
      </RibbonPanel>
      <div className="flex-1 bg-linear-to-b from-[#e6e6e6] to-[#a0a0a0]" />
    </>
  )
}

/* ---------- side panels ---------- */

function PanelHeader({ children }: { children: ReactNode }) {
  return (
    <div className="flex h-[18px] items-center justify-between bg-[#bfcddb] pr-[6px] pl-1">
      <h2 className="truncate text-[11px] leading-4 text-black">{children}</h2>
      <button type="button" aria-label="パネルを閉じる">
        <svg viewBox="0 0 8 8" className="size-2" aria-hidden="true"><path d="M.5.5l7 7M7.500.5l-7 7" stroke="#000" strokeWidth="1.600" /></svg>
      </button>
    </div>
  )
}

const properties = [
  { name: 'ビュー尺度', value: '1 : 100', kind: 'input' },
  { name: '尺度の値　 1:', value: '100', kind: 'disabled' },
  { name: 'モデルを表示', value: '標準', kind: 'text' },
  { name: '詳細レベル', value: '標準', kind: 'text' },
  { name: 'パーツ表示', value: 'オリジナルを表示', kind: 'text' },
  { name: '表示/グラフィック...', value: '編集...', kind: 'button' },
  { name: 'グラフィックス表...', value: '編集...', kind: 'button' },
  { name: 'アンダーレイ', value: 'なし', kind: 'text' },
]

function ScrollTrack({ thumb }: { thumb: string }) {
  return (
    <div className="flex w-[15px] shrink-0 flex-col items-center bg-[#f0f0f0]">
      <span className="flex h-[17px] items-center"><Chevron dir="up" /></span>
      <span className={clsx('w-full bg-[#cdcdcd]', thumb)} />
      <span className="mt-auto flex h-4 items-center"><Chevron dir="down" /></span>
    </div>
  )
}

function PropertiesPanel() {
  const scaleId = useId()
  return (
    <section className="pb-[6px]">
      <PanelHeader>プロパティ</PanelHeader>
      <div className="mt-[3px] mr-[2px] border-t border-l-2 border-[#777]">
        <button type="button" className="flex h-[73px] w-full items-center border-y border-black bg-linear-to-b from-white to-[#ececec] pr-[2px] pl-[3px] text-left text-xs leading-4 text-[#333]">
          <span className="flex size-[66px] items-center justify-center border border-[#ccc] bg-[#f7f7f7]">
            <svg viewBox="0 0 32 32" className="size-8" aria-hidden="true">
              <g stroke={INK} fill="#f4f5f7">
                <path d="M19.500 2.500h9v12h-9z" fill="#dfe2e6" />
                <path d="M.5.5h19v28H.5z" />
                <path d="M3.500 2v8M6.500 2v8M9.500 2v8M12.500 2v8M15.500 2v8M2 14.500h9M2 17.500h9M2 20.500h9M2 23.500h9M1 11.500h18" />
                <path d="M12.500 11.500h18v18h-18z" />
                <path d="M15.500 13v15M18.500 13v15M21.500 13v15M24.500 13v15M27.500 13v15" />
              </g>
            </svg>
          </span>
          <span className="ml-1 flex-1">構造平面<br />構造平面図</span>
          <svg viewBox="0 0 7 4" className="h-1 w-[7px]" aria-hidden="true"><path d="M0 0h7L3.500 4z" fill="#333" /></svg>
        </button>
        <div className="flex h-[26px] items-center bg-[#f0f0f0]">
          <div className="relative">
            <select aria-label="ビュー" className="block h-[22px] w-[122px] appearance-none border border-[#adadad] bg-[#e6e6e6] pl-[3px] text-[11px] text-black">
              <option>構造平面: レベル 3</option>
            </select>
            <Chevron dir="down" className="pointer-events-none absolute top-[7px] right-1 text-[#505050]" />
          </div>
          <button type="button" className="ml-[6px] flex items-center gap-1 text-[11px] whitespace-nowrap"><Icon name="editType" />タイプを編集</button>
        </div>
        <div className="flex h-[154px] overflow-hidden bg-white">
          <div className="min-w-0 flex-1">
            <h3 className="flex h-[18px] items-center justify-between bg-[#dadada] pr-[6px] pl-[2px] text-[11px]">
              グラフィックス
              <svg viewBox="0 0 6 8" className="h-2 w-[6px]" aria-hidden="true"><path d="M0 4l3-3 3 3M0 8l3-3 3 3" fill="none" stroke="#000" strokeWidth="1.300" /></svg>
            </h3>
            <table className="w-full table-fixed border-collapse text-[11px] leading-4 whitespace-nowrap">
              <tbody>
                {properties.map((row, i) => (
                  <tr key={row.name} className={clsx('h-[18px]', row.kind === 'disabled' && 'text-[#888]')}>
                    <th scope="row" className="w-[100px] border-r border-b border-dotted border-[#777] p-0 pl-[10px] text-left font-normal">
                      {row.kind === 'input' ? <label htmlFor={scaleId}>{row.name}</label> : row.name}
                    </th>
                    <td className={clsx('border-r border-b border-dotted border-[#777] p-0', (i === 1 || row.kind === 'text') && 'pl-[2px]')}>
                      {row.kind === 'input' && <input id={scaleId} defaultValue={row.value} className="block h-[17px] w-full border border-black bg-white pl-[5px] text-xs outline-none" />}
                      {row.kind === 'button' && <button type="button" className="block h-4 w-full border border-r-2 border-b-2 border-[#aaa] bg-[#e6e6e6] text-xs leading-3">{row.value}</button>}
                      {row.kind !== 'input' && row.kind !== 'button' && row.value}
                    </td>
                  </tr>
                ))}
              </tbody>
            </table>
          </div>
          <ScrollTrack thumb="h-[25px]" />
        </div>
        <div className="flex h-[23px] items-center justify-between bg-[#f0f0f0] pr-[2px] pl-[2px]">
          <a href="#help" className="text-[11px] leading-4 text-[#0066cc] underline">プロパティ ヘルプ</a>
          <button type="button" disabled className="h-[19px] w-[86px] border border-[#d5d5d5] text-xs leading-4 text-[#838383]">適用</button>
        </div>
      </div>
    </section>
  )
}

type Node = { label: string; depth: number; icon?: string; toggle?: '+' | '-'; selected?: boolean }

const tree: Node[] = [
  { label: 'ビュー (すべて)', depth: 0, icon: 'treeView', toggle: '-', selected: true },
  { label: '構造伏図 (構造平面図)', depth: 1, toggle: '+' },
  { label: '3D ビュー', depth: 1, toggle: '+' },
  { label: '立面図 (建物の立面)', depth: 1, toggle: '-' },
  { label: '北', depth: 2 },
  { label: '南', depth: 2 },
  { label: '東', depth: 2 },
  { label: '西', depth: 2 },
  { label: '凡例', depth: 0, icon: 'treeLegend' },
  { label: '集計表/数量', depth: 0, icon: 'treeTable' },
  { label: 'シート (すべて)', depth: 0, icon: 'treeSheet' },
  { label: 'ファミリ', depth: 0, icon: 'treeFamily', toggle: '+' },
  { label: 'グループ', depth: 0, icon: 'treeGroup', toggle: '+' },
]

function Toggle({ sign }: { sign: '+' | '-' }) {
  return (
    <svg viewBox="0 0 9 9" className="size-[9px] shrink-0" aria-hidden="true">
      <path d="M.5.5h8v8h-8z" fill="#f6f6f6" stroke="#919191" />
      <path d={sign === '+' ? 'M2 4.500h5M4.500 2v5' : 'M2 4.500h5'} stroke="#1f3f8f" />
    </svg>
  )
}

function TreeRow({ node }: { node: Node }) {
  const label = <span className={clsx('px-[3px]', node.selected && 'bg-[#e4e4e4]')}>{node.label}</span>
  // the dotted trunk of the top level runs down the left of every row
  const trunk = <span className="h-full w-px shrink-0 border-l border-dotted border-[#999]" />

  if (node.depth === 0) {
    return (
      <li className="flex h-[18px] items-center pl-1">
        {node.toggle ? <Toggle sign={node.toggle} /> : <span className="flex h-full w-[9px] justify-center">{trunk}</span>}
        <span className={clsx('border-t border-dotted border-[#999]', node.toggle ? 'w-[7px]' : '-ml-1 w-[11px]')} />
        <Icon name={node.icon!} className="mx-px size-4" />
        {label}
      </li>
    )
  }
  return (
    <li className="flex h-[18px] items-center pl-2">
      {trunk}
      {node.depth === 1 && <span className="ml-[15px] flex"><Toggle sign={node.toggle!} /></span>}
      {node.depth === 2 && <span className="ml-[39px] h-full border-l border-dotted border-[#999]" />}
      <span className={clsx('border-t border-dotted border-[#999]', node.depth === 1 ? 'w-[10px]' : 'w-[14px]')} />
      {label}
    </li>
  )
}

function ProjectBrowser() {
  return (
    <section>
      <PanelHeader>プロジェクト ブラウザ - Sample_Manu...</PanelHeader>
      <div className="mt-[3px] mr-[2px] flex h-[233px] overflow-hidden border-t border-l-2 border-[#777] bg-white">
        <ul className="flex-1 text-xs leading-[18px] whitespace-nowrap text-black">
          {tree.map(node => <TreeRow key={node.label} node={node} />)}
        </ul>
        <ScrollTrack thumb="h-[171px]" />
      </div>
    </section>
  )
}

/* ---------- drawing ---------- */

const columns = [430, 595, 760]
const gridRows = [
  { label: '6', y: 221 },
  { label: '5', y: 419 },
  { label: '4', y: 617 },
]

function VLines({ xs, y1, y2, dash, width = 1 }: { xs: number[]; y1: number; y2: number; dash?: string; width?: number }) {
  return (
    <>
      {xs.map(x => <path key={x} d={`M${x} ${y1}V${y2}`} stroke="#000" strokeWidth={width} strokeDasharray={dash} />)}
    </>
  )
}

function Girder({ x, y1, y2, half = 5, fill = WOOD }: { x: number; y1: number; y2: number; half?: number; fill?: string }) {
  return <rect x={x + 0.5 - half} y={y1 + 0.5} width={half * 2} height={y2 - y1} fill={fill} stroke="#000" />
}

function Flange({ x, y, thick }: { x: number; y: number; thick?: boolean }) {
  return <rect x={x - 5} y={y - (thick ? 1 : 0)} width={11} height={thick ? 2 : 1} />
}

function Bolt({ x, y, fill = '#fff' }: { x: number; y: number; fill?: string }) {
  return <path d={`M${x - 2.5} ${y + 0.5}h5v5h-5zM${x - 2.5} ${y + 3}h5M${x} ${y}v6`} fill={fill} stroke="#000" />
}

function Brace({ y1, y2, color }: { y1: number; y2: number; color: string }) {
  const lines = [`M438 ${y1}L589 ${y2}`, `M589 ${y1}L438 ${y2}`]
  return (
    <g shapeRendering="auto" fill="none">
      {lines.map(d => (
        <g key={d}>
          <path d={d} stroke="#000" strokeWidth="6" />
          <path d={d} stroke={color} strokeWidth="4.400" />
          <path d={d} stroke="#000" strokeWidth="1.200" strokeDasharray="15 8" />
        </g>
      ))}
    </g>
  )
}

function Bubble({ cx, cy, label }: { cx: number; cy: number; label: string }) {
  return (
    <g>
      <circle cx={cx} cy={cy} r="21.500" fill="#fff" stroke="#000" shapeRendering="auto" />
      <text x={cx - 3} y={cy + 6} textAnchor="middle" fontSize="14" fontFamily="'Noto Sans CJK JP', sans-serif">{label}</text>
    </g>
  )
}

/** Grid lines, bubbles and horizontal beams shared by both floor plans */
function PlanBase({ children, broken }: { children: ReactNode; broken?: boolean }) {
  return (
    <svg
      viewBox="234 179 764 538"
      preserveAspectRatio="xMinYMin meet"
      className="block h-[538px] w-full"
      shapeRendering="crispEdges"
      role="img"
      aria-label="構造平面図"
    >
      {gridRows.map(({ y, label }) => (
        <g key={label}>
          <path d={`M385 ${y + 0.5}H430M755 ${y + 0.5}H802M593 ${y + 0.5}h5`} stroke="#000" />
          {[435, 600].map(x => <rect key={x} x={x + 0.5} y={y - 4.5} width={154} height={10} fill={WOOD} stroke="#000" />)}
          <path d={`M436 ${y + 0.5}h16M458 ${y + 0.5}h66M528 ${y + 0.5}h62M601 ${y + 0.5}h132M735 ${y + 0.5}h20`} stroke="#000" />
          <Bubble cx={824} cy={y + 0.5} label={label} />
        </g>
      ))}
      {children}
      {columns.map((x, i) => (
        <g key={x}>
          {broken && i > 0 ? (
            <path d={`M${x + 0.5} 179V430M${x + 0.5} 442v10M${x + 0.5} 463v42M${x + 0.5} 515v11M${x + 0.5} 536v42M${x + 0.5} 589v10M${x + 0.5} 606V663`} stroke="#000" />
          ) : (
            <path d={`M${x + 0.5} 179V663`} stroke="#000" />
          )}
          <Bubble cx={x + 1} cy={684} label={String(i + 1)} />
        </g>
      ))}
    </svg>
  )
}

function PlanBefore() {
  const [a, b, c] = columns
  return (
    <PlanBase>
      <Brace y1={230} y2={410} color="#858585" />
      <Brace y1={428} y2={608} color={WOOD} />
      <Girder x={a} y1={231} y2={408} />
      <VLines xs={[a - 1.5, a + 2.5]} y1={232} y2={408} />
      <Girder x={a} y1={430} y2={606} fill="#fff" />
      <Girder x={a} y1={430} y2={606} half={2.5} />
      <VLines xs={[a]} y1={232} y2={606} dash="12 9" width={2} />
      <VLines xs={[a]} y1={210} y2={236} width={2} />
      <VLines xs={[a]} y1={408} y2={432} width={2} />
      <VLines xs={[a]} y1={606} y2={628} width={2} />
      <Girder x={b} y1={231} y2={408} />
      <VLines xs={[b]} y1={232} y2={408} dash="15 9" width={2} />
      <Girder x={b} y1={430} y2={606} fill="#fff" />
      <VLines xs={[b - 2.5]} y1={431} y2={606} dash="9 10" />
      <VLines xs={[b + 2.5]} y1={434} y2={606} dash="10 9" />
      <VLines xs={[b]} y1={431} y2={606} dash="15 6" width={2} />
      <Girder x={c} y1={231} y2={408} />
      <VLines xs={[c - 2.5]} y1={232} y2={408} dash="9 10" />
      <VLines xs={[c + 2.5]} y1={236} y2={408} dash="9 10" />
      <Girder x={c} y1={430} y2={606} fill="#fff" />
      <VLines xs={[c - 2.5, c + 2.5]} y1={431} y2={606} />
      {[a, c].map(x => <g key={x}><Bolt x={x} y={226} fill={x === a ? WOOD : '#fff'} /><Bolt x={x} y={408} fill={x === a ? WOOD : '#fff'} /></g>)}
      {columns.map(x => (
        <g key={x}>
          <Bolt x={x} y={424} fill={x === a ? WOOD : '#fff'} />
          <Bolt x={x} y={606} fill={x === a ? WOOD : '#fff'} />
          <Flange x={x} y={210} thick />
          <Flange x={x} y={232} thick />
          <Flange x={x} y={408} thick />
          <Flange x={x} y={431} thick />
          <Flange x={x} y={606} thick />
          <Flange x={x} y={628} />
        </g>
      ))}
    </PlanBase>
  )
}

function PlanAfter() {
  const [a, b, c] = columns
  return (
    <PlanBase broken>
      <Brace y1={428} y2={608} color={WOOD} />
      <Girder x={a} y1={231} y2={408} />
      <VLines xs={[a - 1.5, a + 2.5]} y1={232} y2={408} />
      <VLines xs={[a]} y1={232} y2={408} dash="12 9" width={2} />
      <Girder x={a} y1={430} y2={606} half={2.5} />
      <VLines xs={[a]} y1={408} y2={432} width={2} />
      <VLines xs={[a]} y1={606} y2={628} width={2} />
      <Bolt x={a} y={226} fill={WOOD} />
      <Bolt x={a} y={408} fill={WOOD} />
      <Bolt x={a} y={424} fill={WOOD} />
      <Bolt x={a} y={606} fill={WOOD} />
      <Girder x={b} y1={231} y2={408} />
      <VLines xs={[b]} y1={232} y2={408} dash="15 9" width={2} />
      <Girder x={c} y1={231} y2={408} />
      {columns.map(x => (
        <g key={x}>
          {x !== a && <><Flange x={x} y={210} thick /><Flange x={x} y={232} thick /></>}
          <Flange x={x} y={408} thick />
          <Flange x={x} y={430} />
          <Flange x={x} y={606} thick />
          <Flange x={x} y={628} />
        </g>
      ))}
      {/* selected column */}
      <path d={`M${a - 5} 210h11M${a} 210v22M${a - 5} 232h11`} stroke="#7da7e8" strokeWidth="4" />
      <path d={`M${a - 5} 210h11M${a} 210v22M${a - 5} 232h11`} stroke="#0a2a6e" strokeWidth="2" />
    </PlanBase>
  )
}

function ViewControls() {
  return (
    <div className="absolute top-2 right-[5px] flex gap-[6px] text-[#555]">
      <button type="button" aria-label="ビューを最小化"><svg viewBox="0 0 12 12" className="size-3" aria-hidden="true"><path d="M.6 6.500h11v3H.6z" fill="#fff" stroke="currentColor" /></svg></button>
      <button type="button" aria-label="ビューを元に戻す"><svg viewBox="0 0 12 12" className="size-3" aria-hidden="true"><path d="M3.500.5h8v8h-2M.5 3h8.500v8.500H.5zM3.500 6h2.500v2.500H3.500z" fill="#fff" stroke="currentColor" strokeWidth="1.200" /></svg></button>
      <button type="button" aria-label="ビューを閉じる"><svg viewBox="0 0 12 12" className="size-3" aria-hidden="true"><path d="M1 1h3l2 3 2-3h3v2L8 6l3 3v2H8L6 8l-2 3H1V9l3-3-3-3z" fill="#fff" stroke="currentColor" /></svg></button>
    </div>
  )
}

function NavigationBar() {
  return (
    <div className="absolute top-7 right-px flex h-[118px] w-9 flex-col items-center rounded-md border-2 border-[#bdbdbd] bg-[#f5f5f5] text-[#999]">
      <svg viewBox="0 0 8 8" className="mt-[2px] mr-[3px] size-2 self-end" aria-hidden="true"><circle cx="4" cy="4" r="3.500" fill="none" stroke="currentColor" /><path d="M2.500 2.500l3 3M5.500 2.500l-3 3" stroke="currentColor" /></svg>
      <button type="button" aria-label="ホイール" className="mt-2 flex flex-col items-center gap-[6px]">
        <svg viewBox="0 0 25 25" className="size-6" aria-hidden="true">
          <path d="M10 1.500h9v9A9.500 9.500 0 1 1 10 1.500z" fill="#f0f1f3" stroke="#aab0b8" strokeWidth="1.500" />
          <circle cx="10" cy="11" r="4.500" fill="#fff" stroke="#aab0b8" strokeWidth="1.300" />
          <path d="M4 17l3-3M13 14l3 3" stroke="#aab0b8" />
          <text x="18" y="24" fontSize="10" fontWeight="bold" textAnchor="middle" fill="#6f9cc4">2D</text>
        </svg>
        <Caret className="text-[#777]" />
      </button>
      <span className="mt-1 h-px w-[26px] bg-[#bbb]" />
      <button type="button" aria-label="ズーム" className="mt-2 flex flex-col items-center gap-[10px]">
        <svg viewBox="0 0 16 16" className="size-4" aria-hidden="true">
          <path d="M.5.5h11v11H.5z" fill="#bcd3ae" stroke="#8db07a" />
          <circle cx="10.500" cy="10" r="3.500" fill="#fff" stroke="#9aa0a8" strokeWidth="1.200" />
          <path d="M13 12.500l2.500 3" stroke="#8a8a8a" strokeWidth="1.600" />
        </svg>
        <Caret className="text-[#777]" />
      </button>
      <svg viewBox="0 0 8 8" className="mt-auto mr-[3px] mb-[2px] size-2 self-end" aria-hidden="true"><circle cx="4" cy="4" r="3.500" fill="none" stroke="currentColor" /><path d="M2 3.500h4L4 6z" fill="currentColor" /></svg>
    </div>
  )
}

const viewTools = ['detail', 'visual', 'sunOff', 'shadowOff', 'cropOff', 'cropShow', 'glasses', 'bulb', 'filmstrip', 'analytic']

function Grip() {
  return (
    <svg viewBox="0 0 8 8" className="size-2 shrink-0" aria-hidden="true">
      <path d="M6 0h2v2H6zM3 3h2v2H3zM6 3h2v2H6zM0 6h2v2H0zM3 6h2v2H3zM6 6h2v2H6z" fill="#bbb" />
    </svg>
  )
}

function Canvas({ children }: { children: ReactNode }) {
  return (
    <main className="flex min-w-0 flex-1 flex-col border-t-2 border-l-2 border-[#777] bg-white">
      <div className="flex">
        <div className="relative min-w-0 flex-1">
          {children}
          <ViewControls />
          <NavigationBar />
        </div>
        <div className="flex w-[17px] shrink-0 flex-col items-center bg-[#f0f0f0]">
          <span className="flex h-[18px] items-center"><Chevron dir="up" /></span>
          <span className="mt-[243px] h-4 w-[15px] bg-[#cdcdcd]" />
          <span className="mt-auto flex h-[18px] items-center"><Chevron dir="down" /></span>
        </div>
      </div>
      <div className="flex flex-1 items-start bg-[#f0f0f0] pl-8">
        <span className="w-[62px] font-['Noto_Sans_CJK_JP',sans-serif] text-xs leading-4 text-black">1 : 100</span>
        <div className="flex gap-[9px]">
          {viewTools.map(name => <button key={name} type="button" aria-label={name}><Icon name={name} /></button>)}
        </div>
        <div className="ml-[10px] flex h-4 flex-1 items-center">
          <Chevron dir="left" />
          <span className="ml-auto h-[15px] w-[17px] bg-[#cdcdcd]" />
          <Chevron dir="right" className="mr-3 ml-[190px] text-[#505050]" />
          <span className="mr-1"><Grip /></span>
        </div>
      </div>
    </main>
  )
}

/* ---------- status bar ---------- */

function StatusSelect({ label, value, width }: { label: string; value: string; width: string }) {
  return (
    <div className="relative ml-1 shrink-0">
      <select aria-label={label} className={clsx('block h-5 appearance-none bg-white pl-[2px] text-[11px] text-[#888]', width)}>
        <option>{value}</option>
      </select>
      <span className="pointer-events-none absolute inset-y-0 right-0 flex w-[18px] items-center justify-center border-l border-[#e5e5e5] pt-1">
        <Chevron dir="down" className="text-[#b5b5b5]" />
      </span>
    </div>
  )
}

function StatusBar({ message }: { message: string }) {
  return (
    <footer className="flex h-[25px] items-center border-t-2 border-[#8a8a8a] bg-linear-to-b from-[#e2e2e2] to-[#bdbdbd] text-xs text-[#222]">
      <span className="w-[325px] shrink-0 overflow-hidden pl-[2px] leading-5 whitespace-nowrap">{message}</span>
      <button type="button" aria-label="ワークセット" className="ml-[3px] flex h-5 w-6 shrink-0 items-center justify-center bg-[#d0d0d0]"><Icon name="workset" /></button>
      <StatusSelect label="アクティブ ワークセット" value="" width="w-[204px]" />
      <button type="button" className="ml-1 flex h-5 w-14 shrink-0 items-center gap-[6px] bg-[#d6d6d6] pl-[5px]"><Icon name="filter" />:0</button>
      <button type="button" aria-label="デザイン オプション" className="ml-[3px] flex h-5 w-6 shrink-0 items-center justify-center bg-[#d6d6d6]"><Icon name="options" /></button>
      <button type="button" aria-label="オプションを除外" className="ml-[2px] flex h-5 w-6 shrink-0 items-center justify-center bg-[#d0d0d0]"><Icon name="exclude" /></button>
      <StatusSelect label="メイン モデル" value="メイン モデル" width="w-[155px]" />
      <span className="mr-1 ml-auto self-end pb-1"><Grip /></span>
    </footer>
  )
}

/* ---------- windows ---------- */

type WindowProps = {
  className: string
  activeTab: string
  status: string
  canUndo?: boolean
  ribbon: ReactNode
  plan: ReactNode
}

function AppWindow({ className, activeTab, status, canUndo = false, ribbon, plan }: WindowProps) {
  return (
    <div className={clsx('absolute border border-[#4a94bf] bg-[#6ac1f0] px-[7px] pb-[7px]', className)}>
      <TitleBar canUndo={canUndo} />
      <div className="border-r border-[#4a94bf] bg-[#f0f0f0]">
        <RibbonTabs active={activeTab} />
        <div className="flex h-[94px] overflow-hidden bg-white pl-px">{ribbon}</div>
        <div className="h-[31px] bg-[#e0e1e3]" />
        <div className="flex">
          <aside className="mr-1 w-[220px] shrink-0">
            <PropertiesPanel />
            <ProjectBrowser />
          </aside>
          <Canvas>{plan}</Canvas>
        </div>
        <StatusBar message={status} />
      </div>
      <button type="button" aria-label="アプリケーション メニュー" className="absolute top-[7px] left-[7px] size-[41px] border border-black bg-linear-to-b from-[#c9c9c9] to-[#6f6f6f]">
        <AppLogo />
      </button>
    </div>
  )
}

export default function App() {
  return (
    <div className="relative min-h-screen overflow-hidden bg-white font-['Noto_Sans','Noto_Sans_CJK_JP',sans-serif] [font-feature-settings:'palt']">
      <AppWindow
        className="top-0 right-[796px] left-0"
        activeTab="建築"
        status="選択＝クリック、次へ＝[Tab]、追加＝[Ctrl]、除外＝[SHIFT]、最"
        ribbon={<ArchitectureRibbon />}
        plan={<PlanBefore />}
      />
      <AppWindow
        className="top-[290px] right-1 left-[792px]"
        activeTab="REXJ"
        status="構造柱 : H-H 形鋼-柱 : H700x300x12"
        canUndo
        ribbon={<RexjRibbon />}
        plan={<PlanAfter />}
      />
    </div>
  )
}
